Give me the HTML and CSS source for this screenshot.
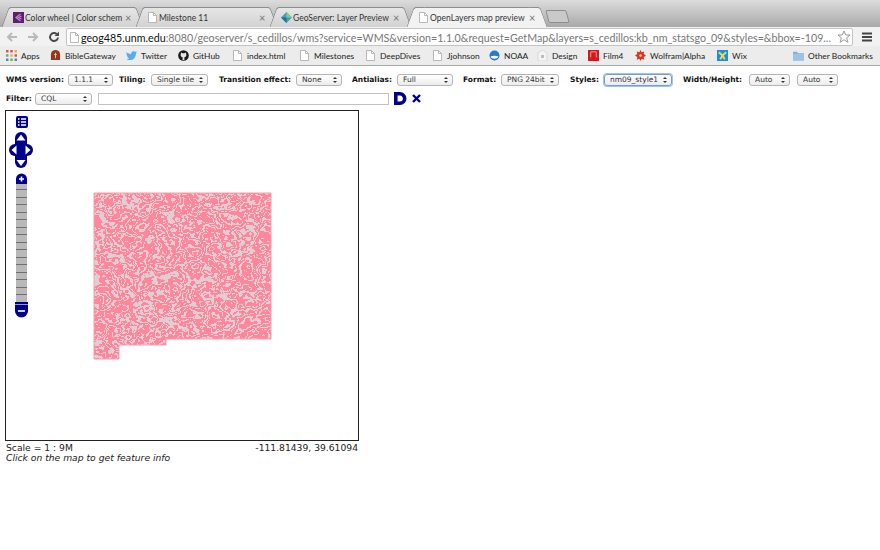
FILE: index.html
```html
<!DOCTYPE html>
<html lang="en">
<head>
  <meta charset="UTF-8" />
  <title>OpenLayers map preview</title>
  <link rel="stylesheet" href="styles.css">
</head>
<body>

<div class="chrome">
  <div class="tabstrip">
    <div class="tab tab-1">
      <svg class="fav" viewBox="0 0 11 11"><rect width="11" height="11" fill="#5b1f6b"/><path d="M7.5 2 3 5.5 7.5 9M8.5 4 5.5 5.5 8.5 7" fill="none" stroke="#c58ad6" stroke-width="1.2"/></svg>
      <span class="tab-title">Color wheel | Color schem</span><span class="tab-x">×</span>
    </div>
    <div class="tab tab-2">
      <svg class="fav" viewBox="0 0 11 11"><use href="#page"/></svg>
      <span class="tab-title">Milestone 11</span><span class="tab-x">×</span>
    </div>
    <div class="tab tab-3">
      <svg class="fav" viewBox="0 0 11 11"><path d="M5.5 0 11 5.5 5.5 11 0 5.5z" fill="#3f9fc4"/><path d="M5.5 0 11 5.5H5.5z" fill="#8ccf6a"/><path d="M0 5.5h5.500V11z" fill="#1f6f9f"/></svg>
      <span class="tab-title">GeoServer: Layer Preview</span><span class="tab-x">×</span>
    </div>
    <div class="tab tab-active">
      <svg class="fav" viewBox="0 0 11 11"><use href="#page"/></svg>
      <span class="tab-title">OpenLayers map preview</span><span class="tab-x">×</span>
    </div>
    <div class="newtab"></div>
  </div>

  <div class="toolbar">
    <svg class="nav-icon" viewBox="0 0 12 12"><path d="M11 6H2M6 2 2 6l4 4" fill="none" stroke="#b9b9b9" stroke-width="2"/></svg>
    <svg class="nav-icon" viewBox="0 0 12 12"><path d="M1 6h9M6 2l4 4-4 4" fill="none" stroke="#b9b9b9" stroke-width="2"/></svg>
    <svg class="nav-icon" viewBox="0 0 12 12"><path d="M10 6.500A4 4 0 1 1 8.800 3.100" fill="none" stroke="#4a4a4a" stroke-width="1.900"/><path d="M11 0.500V5H6.500z" fill="#4a4a4a"/></svg>
    <div class="omnibox">
      <svg class="fav" viewBox="0 0 11 11"><use href="#page"/></svg>
      <span class="url"><b>geog485.unm.edu</b>:8080/geoserver/s_cedillos/wms?service=WMS&amp;version=1.1.0&amp;request=GetMap&amp;layers=s_cedillos:kb_nm_statsgo_09&amp;styles=&amp;bbox=-109...</span>
      <svg class="star" viewBox="0 0 14 14"><path d="M7 1l1.800 4h4.200l-3.400 2.800 1.300 4.500L7 9.700l-3.900 2.600 1.300-4.500L1 5h4.200z" fill="#fff" stroke="#9a9a9a"/></svg>
    </div>
    <svg class="menu-icon" viewBox="0 0 12 10"><path d="M1 1.500h10M1 5h10M1 8.500h10" stroke="#444" stroke-width="1.800"/></svg>
  </div>

  <div class="bookmarks">
    <div class="bm bm-apps">
      <svg viewBox="0 0 9 9"><g fill="#d9534f"><rect width="2" height="2"/><rect x="3.500" width="2" height="2"/></g><rect x="7" width="2" height="2" fill="#f0ad4e"/><rect y="3.500" width="2" height="2" fill="#5cb85c"/><rect x="3.500" y="3.500" width="2" height="2" fill="#f0ad4e"/><rect x="7" y="3.500" width="2" height="2" fill="#d9534f"/><rect y="7" width="2" height="2" fill="#428bca"/><rect x="3.500" y="7" width="2" height="2" fill="#5cb85c"/><rect x="7" y="7" width="2" height="2" fill="#428bca"/></svg>
      Apps
    </div>
    <div class="bm bm-bible">
      <svg viewBox="0 0 12 12"><path d="M1 11V5a5 5 0 0 1 10 0v6z" fill="#8c3a22"/><path d="M6 3v6M4.500 5h3" stroke="#e8c9b8"/></svg>
      BibleGateway
    </div>
    <div class="bm bm-twitter">
      <svg viewBox="0 0 12 12"><path d="M0 2c1.500 1.500 3 2.300 5.500 2.500C5.500 2 8 .5 9.800 2l2-.6-1 1.600 1-.3-1 1.300C10.800 8 8 11 4.500 11 2.800 11 1.500 10.500.5 10c1.300 0 2.300-.3 3-1C2.300 8.800 1.500 8 1.200 7h1C1 6.300.5 5.300.5 4.300l1 .3C.5 3.800 0 3 0 2z" fill="#55acee"/></svg>
      Twitter
    </div>
    <div class="bm bm-github">
      <svg viewBox="0 0 12 12"><circle cx="6" cy="6" r="5.800" fill="#1a1a1a"/><path d="M3 4.500 3.300 2.800 5 3.500h2l1.700-.7L9 4.500c.5 1.800-.5 3.200-2 3.400v3H5v-3C3.500 7.700 2.500 6.300 3 4.500z" fill="#e6e6e6"/></svg>
      GitHub
    </div>
    <div class="bm bm-index"><svg viewBox="0 0 11 11"><use href="#page"/></svg>index.html</div>
    <div class="bm bm-miles"><svg viewBox="0 0 11 11"><use href="#page"/></svg>Milestones</div>
    <div class="bm bm-deep"><svg viewBox="0 0 11 11"><use href="#page"/></svg>DeepDives</div>
    <div class="bm bm-jj"><svg viewBox="0 0 11 11"><use href="#page"/></svg>Jjohnson</div>
    <div class="bm bm-noaa">
      <svg viewBox="0 0 11 11"><circle cx="5.500" cy="5.500" r="5" fill="#2a78c9"/><path d="M1.500 6.500c2.500-1 5.500-1 8 0-1 3-7 3-8 0z" fill="#fff"/></svg>
      NOAA
    </div>
    <div class="bm bm-design">
      <svg viewBox="0 0 11 11"><path d="M1 3 5.500 0 10 3v8H1z" fill="#f4f4f4" stroke="#c9c9c9" stroke-width=".6"/><rect x="4" y="5" width="3" height="3" fill="#bdbdbd"/></svg>
      Design
    </div>
    <div class="bm bm-film">
      <svg viewBox="0 0 12 12"><rect width="12" height="12" fill="#d8181f"/><path d="M3 8V2h6v6" fill="none" stroke="#f3a5a5"/></svg>
      Film4
    </div>
    <div class="bm bm-wolfram">
      <svg viewBox="0 0 12 12"><path d="M6 0l1.300 2.500L10 1.500 9.500 4.400 12 6 9.500 7.600 10 10.500 7.300 9.500 6 12 4.700 9.500 2 10.500 2.500 7.600 0 6 2.500 4.400 2 1.500 4.700 2.500z" fill="#d8361e"/><circle cx="6" cy="6" r="1.500" fill="#f6b7a8"/></svg>
      Wolfram|Alpha
    </div>
    <div class="bm bm-wix">
      <svg viewBox="0 0 12 12"><rect width="12" height="12" fill="#1c8fe3"/><path d="M2 2.500 6 6l4-3.500M3.500 10 6 6l2.500 4" fill="none" stroke="#f7d84a" stroke-width="2"/></svg>
      Wix
    </div>
    <div class="bm bm-other">
      <svg viewBox="0 0 12 11"><path d="M0 1.500h4.500l1 1.500H12v8H0z" fill="#7fb0d6"/><rect y="3.500" width="12" height="7.500" fill="#9cc4e2"/></svg>
      Other Bookmarks
    </div>
  </div>
</div>

<div class="page">
  <div class="opts">
    <label class="lb-wms">WMS version:</label><div class="sel w-45">1.1.1<i></i></div>
    <label class="lb-tiling">Tiling:</label><div class="sel w-57">Single tile<i></i></div>
    <label class="lb-trans">Transition effect:</label><div class="sel w-46">None<i></i></div>
    <label class="lb-anti">Antialias:</label><div class="sel w-56">Full<i></i></div>
    <label class="lb-format">Format:</label><div class="sel w-58">PNG 24bit<i></i></div>
    <label class="lb-styles">Styles:</label><div class="sel sel-focus w-68">nm09_style1<i></i></div>
    <label class="lb-size">Width/Height:</label><div class="sel w-41">Auto<i></i></div><div class="sel w-41 sel-next">Auto<i></i></div>
  </div>

  <div class="opts filter-row">
    <label class="lb-filter">Filter:</label><div class="sel w-57">CQL<i></i></div>
    <input class="cql" type="text" />
    <svg class="go" viewBox="0 0 13 13"><path d="M1.800 1.800H6a4.700 4.700 0 0 1 0 9.400H1.800z" fill="none" stroke="#00008b" stroke-width="3.600"/></svg>
    <svg class="clear" viewBox="0 0 9 9"><path d="M1 1l7 7M8 1 1 8" stroke="#00008b" stroke-width="2.400"/></svg>
  </div>

  <div class="map">
    <svg class="map-svg" viewBox="0 0 352 329">
      <defs>
        <filter id="soils" x="0" y="0" width="100%" height="100%" color-interpolation-filters="sRGB">
          <feTurbulence type="fractalNoise" baseFrequency="0.04 0.05" numOctaves="4" seed="7"/>
          <feColorMatrix values="0 0 0 0 1  0 0 0 0 0.53  0 0 0 0 0.61  1 0 0 0 0"/>
          <feComponentTransfer>
            <feFuncA type="discrete" tableValues="1 1 1 0 1 1 1 0 0 1 1 1 0 1 1 0 0 1 1 0 1 1 1 0 0 1 1 1 0 1 1 0 1 1 1 0"/>
          </feComponentTransfer>
          <feComposite in2="SourceGraphic" operator="in" result="lines"/>
          <feMerge><feMergeNode in="SourceGraphic"/><feMergeNode in="lines"/></feMerge>
        </filter>
      </defs>
      <path class="state" filter="url(#soils)" d="M88 82H265V228H160V234H113V248H88z"/>
      <path class="state-edge" d="M88 82H265V228H160V234H113V248H88z"/>

      <!-- layer switcher -->
      <rect x="10" y="5" width="12" height="12" rx="2" fill="#00008b"/>
      <path d="M12 8h1.500M15 8h5M12 11h1.500M15 11h5M12 14h1.500M15 14h5" stroke="#fff" stroke-width="1.500"/>

      <!-- pan -->
      <rect x="9" y="21" width="12" height="36" rx="6" fill="#00008b"/>
      <rect x="3" y="33" width="24" height="12" rx="6" fill="#00008b"/>
      <path d="M15 23.500l4.500 6h-9zM15 55l4.500-6h-9zM5.500 39l5-4.500v9zM24.500 39l-5-4.500v9z" fill="#fff"/>

      <!-- zoom bar -->
      <rect class="zoom-track" x="10" y="72" width="11" height="120"/>
      <path class="zoom-rungs" d="M10 78.500h11M10 86.500h11M10 93.500h11M10 101.500h11M10 108.500h11M10 116.500h11M10 123.500h11M10 131.500h11M10 138.500h11M10 146.500h11M10 153.500h11M10 161.500h11M10 168.500h11M10 176.500h11M10 183.500h11"/>
      <path d="M10 73v-5a5.500 5.500 0 0 1 11 0v5z" fill="#00008b"/>
      <path d="M13 68h5M15.500 65.500v5" stroke="#fff" stroke-width="1.600"/>
      <path d="M9 191h13v9a6.500 6.500 0 0 1-13 0z" fill="#00008b"/>
      <path d="M9 193.500h13" stroke="#9a9ac8"/>
      <path d="M12 200h7" stroke="#fff" stroke-width="1.600"/>
    </svg>
  </div>

  <div class="map-status"><span>Scale = 1 : 9M</span><span>-111.81439, 39.61094</span></div>
  <div class="map-hint">Click on the map to get feature info</div>
</div>

<svg class="defs-holder" width="0" height="0">
  <symbol id="page" viewBox="0 0 11 11"><path d="M1.500.5h5l3 3v7h-8z" fill="#fff" stroke="#a8a8a8" stroke-width=".8"/><path d="M6.500.5v3h3" fill="none" stroke="#a8a8a8" stroke-width=".8"/></symbol>
</svg>

</body>
</html>
```
FILE: styles.css
```css
html, body {
  margin: 0;
  padding: 0;
  background: #fff;
}

body {
  width: 880px;
  height: 550px;
  overflow: hidden;
  font-family: "DejaVu Sans", Verdana, sans-serif;
  color: #111;
}

.defs-holder {
  position: absolute;
}

/* browser chrome */
.chrome {
  border-bottom: 1px solid #a9a9a9;
  font-family: Lato, "Open Sans", sans-serif;
}

.tabstrip {
  height: 27px;
  display: flex;
  align-items: flex-end;
  box-sizing: border-box;
  padding-left: 10px;
  background: linear-gradient(#dcdcdc, #a9a9a9);
}

.tab {
  position: relative;
  width: 125px;
  height: 20px;
  margin-right: 9px;
  display: flex;
  align-items: center;
  gap: 1px;
  padding-left: 3px;
  box-sizing: border-box;
  background: linear-gradient(#e6e6e6, #d2d2d2);
  border-top: 1px solid #8e8e8e;
  font-size: 8.500px;
  color: #333;
}

.tab::before,
.tab::after {
  content: "";
  position: absolute;
  top: -1px;
  bottom: 0;
  width: 10px;
  background: inherit;
  border-top: 1px solid #8e8e8e;
}

.tab::before {
  left: -5px;
  transform: skewX(-20deg);
  border-left: 1px solid #8e8e8e;
  border-top-left-radius: 3px;
  z-index: 1;
}

.tab::after {
  right: -5px;
  transform: skewX(20deg);
  border-right: 1px solid #8e8e8e;
  border-top-right-radius: 3px;
}

.tab-active {
  background: #f2f2f2;
  z-index: 2;
  width: 124px;
  margin-left: 3px;
  margin-right: 11px;
}

.tab-title {
  flex: 1;
  white-space: nowrap;
  position: relative;
  z-index: 2;
}

.tab-x {
  position: relative;
  z-index: 2;
  width: 10px;
  color: #777;
  font-size: 11px;
  line-height: 1;
}

.fav {
  width: 11px;
  height: 11px;
  flex: none;
  position: relative;
  z-index: 2;
}

.newtab {
  width: 19px;
  height: 11px;
  margin: 0 0 4px -3px;
  border: 1px solid #8e8e8e;
  border-radius: 2px;
  background: #c9c9c9;
  transform: skewX(15deg);
}

.toolbar {
  height: 19px;
  display: flex;
  align-items: center;
  padding: 0 5px 0 6px;
  background: #f2f2f2;
}

.nav-icon {
  width: 12px;
  height: 12px;
  margin-right: 9px;
  flex: none;
}

.nav-icon + .nav-icon + .nav-icon {
  margin-right: 6px;
}

.omnibox {
  width: 787px;
  height: 18px;
  margin-top: 1px;
  display: flex;
  align-items: center;
  box-sizing: border-box;
  padding-left: 2px;
  background: #fff;
  border: 1px solid #c4c4c4;
  border-radius: 2px;
}

.url {
  flex: 1;
  margin-left: 1px;
  font-size: 10.700px;
  color: #777;
  white-space: nowrap;
  overflow: hidden;
}

.url b {
  font-weight: 400;
  color: #111;
}

.star {
  width: 14px;
  height: 14px;
  margin-right: 1px;
  flex: none;
}

.menu-icon {
  width: 12px;
  height: 10px;
  margin-left: 8px;
  flex: none;
}

.bookmarks {
  height: 19px;
  display: flex;
  align-items: center;
  background: #ececec;
  font-size: 8.400px;
  color: #222;
  white-space: nowrap;
}

.bm {
  display: flex;
  align-items: center;
  gap: 4px;
  flex: none;
}

.bm svg {
  width: 11px;
  height: 11px;
  flex: none;
}

.bm-apps { margin-left: 6px; width: 44px; }
.bm-bible { width: 76px; }
.bm-twitter { width: 52px; }
.bm-github { width: 54px; }
.bm-index { width: 67px; }
.bm-miles { width: 66px; }
.bm-deep { width: 67px; }
.bm-jj { width: 57px; }
.bm-noaa { width: 48px; }
.bm-design { width: 51px; }
.bm-film { width: 47px; }
.bm-wolfram { width: 82px; }
.bm-wix { width: 76px; }

/* page */
.opts {
  height: 13px;
  display: flex;
  align-items: center;
  margin-top: 7px;
  padding-left: 6px;
  font-size: 7.500px;
}

.opts label {
  font-weight: 700;
  color: #111;
  white-space: nowrap;
  flex: none;
}

.lb-wms { width: 62px; }
.lb-tiling { width: 32px; margin-left: 6px; }
.lb-trans { width: 77px; margin-left: 11px; }
.lb-anti { width: 45px; margin-left: 10px; }
.lb-format { width: 38px; margin-left: 10px; }
.lb-styles { width: 34px; margin-left: 11px; }
.lb-size { width: 66px; margin-left: 11px; }
.lb-filter { width: 29px; }

.sel {
  position: relative;
  height: 12px;
  box-sizing: border-box;
  flex: none;
  padding-left: 5px;
  font-size: 7.500px;
  line-height: 10px;
  color: #333;
  background: linear-gradient(#fff, #ececec);
  border: 1px solid #b5b5b5;
  border-radius: 3px;
  white-space: nowrap;
}

.sel i {
  position: absolute;
  right: 4px;
  top: 2px;
  width: 0;
  height: 0;
  border-left: 2px solid transparent;
  border-right: 2px solid transparent;
  border-bottom: 2px solid #333;
}

.sel i::after {
  content: "";
  position: absolute;
  left: -2px;
  top: 4px;
  border-left: 2px solid transparent;
  border-right: 2px solid transparent;
  border-top: 2px solid #333;
}

.sel-focus {
  border-color: #6d9fd8;
  box-shadow: 0 0 0 1px #a3c4ea;
}

.sel-next { margin-left: 7px; }

.w-41 { width: 41px; }
.w-45 { width: 45px; }
.w-46 { width: 46px; }
.w-56 { width: 56px; }
.w-57 { width: 57px; }
.w-58 { width: 58px; }
.w-68 { width: 68px; }

.filter-row {
  margin-top: 6px;
}

.cql {
  width: 291px;
  height: 12px;
  box-sizing: border-box;
  margin: 0 0 0 6px;
  padding: 0;
  background: #fff;
  border: 1px solid #c2c2c2;
}

.go {
  width: 13px;
  height: 13px;
  margin-left: 5px;
}

.clear {
  width: 9px;
  height: 9px;
  margin-left: 5px;
}

.map {
  width: 352px;
  height: 329px;
  margin: 5px 0 0 5px;
  border: 1px solid #222;
  background: #fff;
}

.map-svg {
  display: block;
  width: 352px;
  height: 329px;
}

.state {
  fill: #e2cdd3;
}

.state-edge {
  fill: none;
  stroke: #ff9aa8;
  stroke-width: 1;
}

.zoom-track {
  fill: #b9b9b9;
}

.zoom-rungs {
  stroke: #6f6f6f;
  stroke-width: 1;
}

.map-status {
  width: 352px;
  margin-left: 6px;
  margin-top: 1px;
  display: flex;
  justify-content: space-between;
  font-size: 9.200px;
  line-height: 11px;
  color: #222;
}

.map-hint {
  margin-left: 6px;
  font-size: 9.200px;
  line-height: 10px;
  font-style: italic;
  color: #222;
}
```
